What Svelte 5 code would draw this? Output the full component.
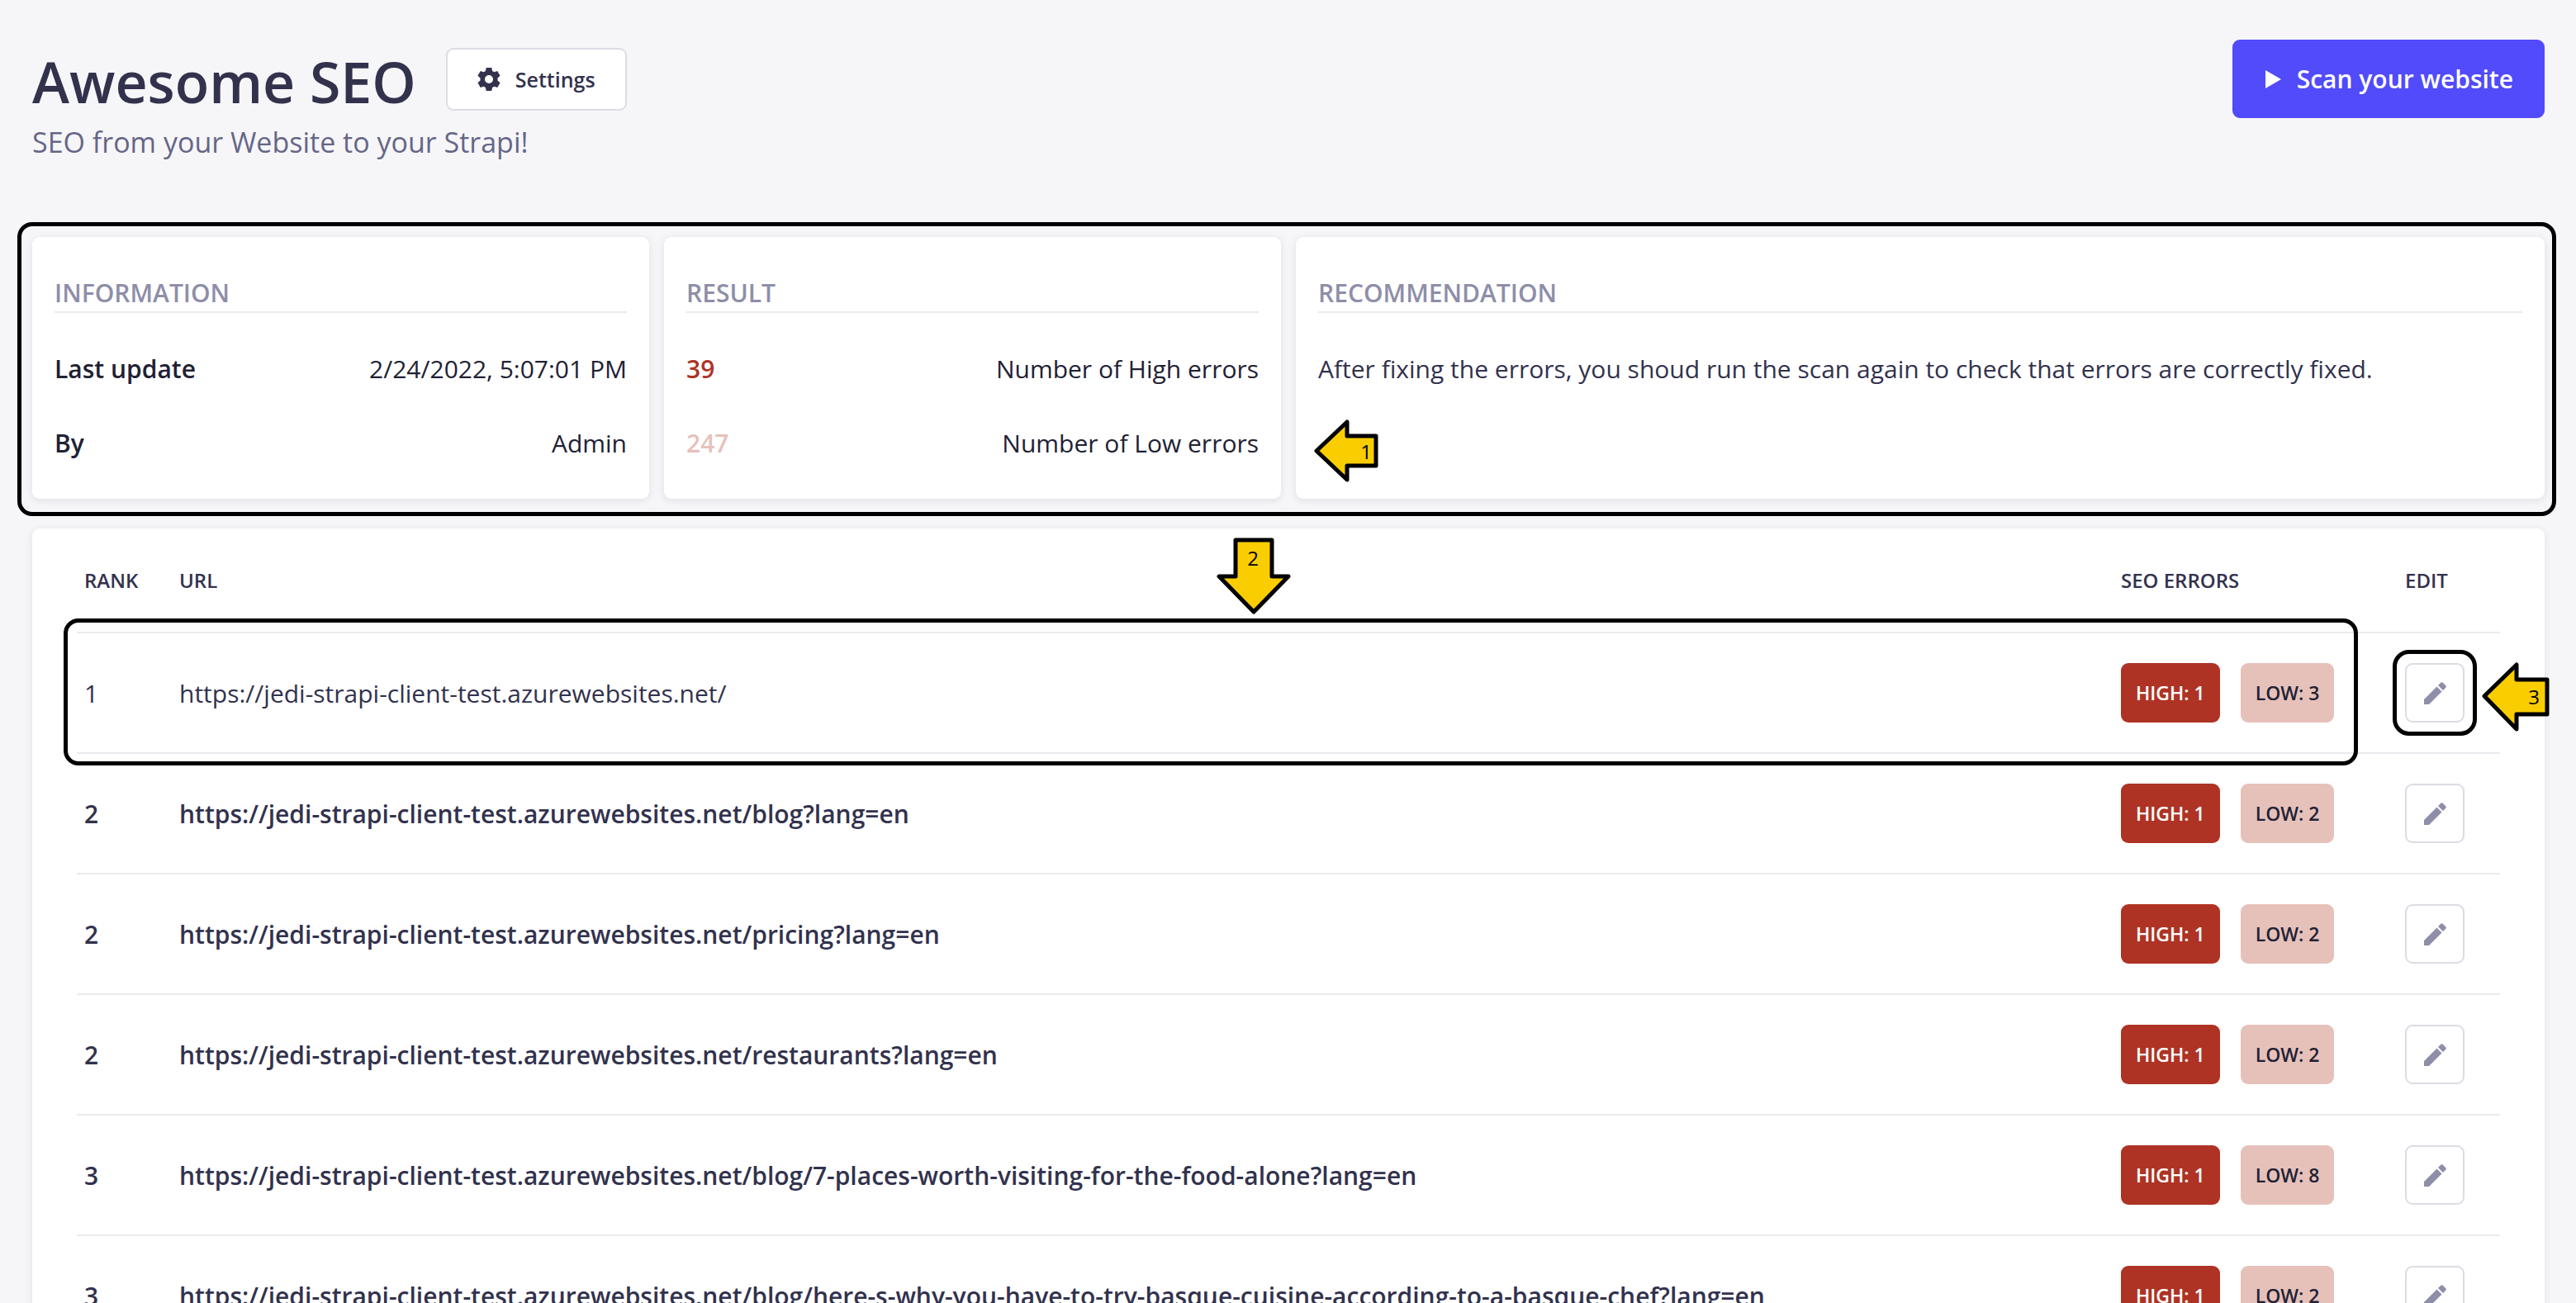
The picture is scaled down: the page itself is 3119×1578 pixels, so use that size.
<script>
  const base = 'https://jedi-strapi-client-test.azurewebsites.net/';
  const rows = [
    { rank: 1, path: '', high: 1, low: 3, current: true },
    { rank: 2, path: 'blog?lang=en', high: 1, low: 2 },
    { rank: 2, path: 'pricing?lang=en', high: 1, low: 2 },
    { rank: 2, path: 'restaurants?lang=en', high: 1, low: 2 },
    { rank: 3, path: 'blog/7-places-worth-visiting-for-the-food-alone?lang=en', high: 1, low: 8 },
    { rank: 3, path: 'blog/here-s-why-you-have-to-try-basque-cuisine-according-to-a-basque-chef?lang=en', high: 1, low: 2 }
  ];
</script>

<div class="page">
  <header>
    <div class="title-row">
      <h1>Awesome SEO</h1>
      <button class="settings" type="button">
        <svg viewBox="0 0 24 24" aria-hidden="true">
          <path fill-rule="evenodd" d="M9.200 0h5.600l.7 3.400 2 1.200 3.300-1.100 2.800 4.900L21 10.700v2.600l2.600 2.300-2.800 4.900-3.300-1.100-2 1.200-.7 3.400H9.200l-.7-3.400-2-1.200-3.300 1.100-2.800-4.900L3 13.300v-2.600L.4 8.400l2.800-4.900 3.300 1.100 2-1.200zM12 7.700a4.300 4.300 0 1 0 0 8.600 4.300 4.300 0 0 0 0-8.600z" />
        </svg>
        Settings
      </button>
      <button class="scan" type="button">
        <svg viewBox="0 0 20 22" aria-hidden="true"><path d="M0 0 19 11 0 22z" /></svg>
        Scan your website
      </button>
    </div>
    <p class="subtitle">SEO from your Website to your Strapi!</p>
  </header>

  <main>
    <div class="cards">
      <section class="card">
        <h2>INFORMATION</h2>
        <dl>
          <div><dt>Last update</dt><dd>2/24/2022, 5:07:01 PM</dd></div>
          <div><dt>By</dt><dd>Admin</dd></div>
        </dl>
      </section>
      <section class="card">
        <h2>RESULT</h2>
        <dl>
          <div><dt class="high-count">39</dt><dd>Number of High errors</dd></div>
          <div><dt class="low-count">247</dt><dd>Number of Low errors</dd></div>
        </dl>
      </section>
      <section class="card wide">
        <h2>RECOMMENDATION</h2>
        <p>After fixing the errors, you shoud run the scan again to check that errors are correctly fixed.</p>
        <svg class="arrow arrow-1" viewBox="0 0 78 76" aria-hidden="true">
          <path d="M3 38 40 3V20H75V56H40V73z" />
          <text x="63" y="48">1</text>
        </svg>
      </section>
      <div class="frame cards-frame"></div>
    </div>

    <section class="table-card">
      <table>
        <thead>
          <tr>
            <th class="rank">RANK</th>
            <th>URL</th>
            <th class="errors">SEO ERRORS</th>
            <th class="edit">EDIT</th>
          </tr>
        </thead>
        <tbody>
          {#each rows as row}
            <tr class:current={row.current}>
              <td class="rank">{row.rank}</td>
              <td>{base}{row.path}</td>
              <td>
                <div class="badges">
                  <span class="badge high">HIGH: {row.high}</span>
                  <span class="badge low">LOW: {row.low}</span>
                </div>
                {#if row.current}
                  <div class="frame row-frame"></div>
                  <svg class="arrow arrow-2" viewBox="0 0 92 94" aria-hidden="true">
                    <path d="M24 3H68V47H88L46 90 4 47H24z" />
                    <text x="45" y="34">2</text>
                  </svg>
                {/if}
              </td>
              <td>
                <div class="edit-cell">
                  <button class="pencil" type="button" aria-label="Edit {base}{row.path}">
                    <svg viewBox="0 0 27 27" aria-hidden="true">
                      <path d="M0 27V21L15.500 5.500 21.500 11.500 6 27zM17 4 20 1Q21.500-.5 23 1L26 4Q27.500 5.500 26 7L23 10z" />
                    </svg>
                  </button>
                  {#if row.current}
                    <div class="frame edit-frame"></div>
                    <svg class="arrow arrow-3" viewBox="0 0 82 86" aria-hidden="true">
                      <path d="M3 42 42 4V22H79V64H42V82z" />
                      <text x="63" y="52">3</text>
                    </svg>
                  {/if}
                </div>
              </td>
            </tr>
          {/each}
        </tbody>
      </table>
    </section>
  </main>
</div>

<style>
  :global(body) {
    background: #f6f6f9;
  }
  .page {
    height: 100vh;
    overflow-y: auto;
    scrollbar-width: none;
    box-sizing: border-box;
    padding: 48px 38px 54px 39px;
    background: #f6f6f9;
    color: #32324d;
    font-family: 'Open Sans', 'Noto Sans', sans-serif;
    font-size: 30px;
    line-height: 45px;
  }
  h1, h2, p, dl, dd {
    margin: 0;
  }
  .title-row {
    display: flex;
    align-items: center;
    gap: 36px;
    height: 95px;
  }
  h1 {
    padding-top: 6px;
    font-size: 68px;
    line-height: 90px;
    font-weight: 600;
  }
  button {
    display: flex;
    align-items: center;
    justify-content: center;
    box-sizing: border-box;
    border: 2px solid #dcdce4;
    border-radius: 9px;
    background: #fff;
    color: #32324d;
    font-family: inherit;
    font-weight: 600;
  }
  .settings {
    height: 76px;
    padding: 0 36px;
    gap: 18px;
    font-size: 25px;
  }
  .settings svg {
    width: 28px;
    height: 28px;
    fill: #32324d;
  }
  .scan {
    height: 95px;
    margin-left: auto;
    padding: 0 36px 0 38px;
    gap: 18px;
    border-color: #514bfb;
    background: #514bfb;
    color: #fff;
    font-size: 30px;
  }
  .scan svg {
    width: 20px;
    height: 22px;
    fill: #fff;
  }
  .subtitle {
    margin-bottom: 86px;
    color: #666687;
    font-size: 34px;
    line-height: 58px;
  }
  .cards {
    position: relative;
    display: grid;
    grid-template-columns: repeat(12, 1fr);
    gap: 18px;
    margin-bottom: 36px;
  }
  .card {
    position: relative;
    grid-column: span 3;
    padding: 46px 27px 22px;
  }
  .card.wide {
    grid-column: span 6;
  }
  .card, .table-card {
    border-radius: 9px;
    background: #fff;
    box-shadow: 0 2px 10px rgba(33, 33, 52, 0.1);
  }
  h2 {
    margin-bottom: 23px;
    border-bottom: 2px solid #eaeaef;
    color: #8e8ea9;
    font-size: 30px;
    line-height: 44px;
    font-weight: 600;
  }
  dl div {
    display: flex;
    justify-content: space-between;
    color: #212134;
    line-height: 90px;
  }
  dt {
    font-weight: 600;
  }
  .high-count {
    color: #ae3324;
  }
  .low-count {
    color: #e6c1ba;
  }
  .card p {
    line-height: 90px;
  }
  .table-card {
    padding: 0 54px 54px;
  }
  table {
    width: 100%;
    table-layout: fixed;
    border-spacing: 0;
  }
  th, td {
    box-sizing: border-box;
    padding: 0;
    border-bottom: 2px solid #eaeaef;
    text-align: left;
    white-space: nowrap;
  }
  th {
    height: 127px;
    font-size: 24px;
    font-weight: 600;
  }
  td {
    height: 146px;
    font-weight: 600;
  }
  .current {
    position: relative;
  }
  .current td {
    font-weight: 400;
  }
  .rank {
    width: 124px;
    padding-left: 9px;
  }
  .errors {
    width: 344px;
  }
  .edit {
    width: 115px;
  }
  .badges {
    display: flex;
    gap: 25px;
  }
  .badge {
    box-sizing: border-box;
    height: 72px;
    padding: 0 18px;
    border-radius: 9px;
    font-size: 23px;
    line-height: 72px;
    font-weight: 600;
  }
  .high {
    background: #ae3324;
    color: #fff;
  }
  .low {
    background: #e6c1ba;
    color: #212134;
  }
  .edit-cell {
    position: relative;
    width: 72px;
  }
  .pencil {
    width: 72px;
    height: 72px;
    padding: 0;
  }
  .pencil svg {
    width: 27px;
    height: 27px;
    fill: #8e8ea9;
  }
  .frame {
    position: absolute;
    box-sizing: border-box;
    border: 5px solid #000;
    border-radius: 18px;
    pointer-events: none;
  }
  .cards-frame {
    inset: -18px -14px -21px -18px;
  }
  .row-frame {
    inset: -18px 172px -14px -16px;
  }
  .edit-frame {
    inset: -16px -15px;
    border-radius: 20px;
  }
  .arrow {
    position: absolute;
    pointer-events: none;
  }
  .arrow path {
    fill: #facd00;
    stroke: #000;
    stroke-width: 5px;
    stroke-linejoin: round;
  }
  .arrow text {
    fill: #000;
    font-size: 24px;
    font-weight: 400;
    text-anchor: middle;
  }
  .arrow-1 {
    left: 22px;
    bottom: 20px;
    width: 78px;
    height: 76px;
  }
  .arrow-2 {
    left: 47%;
    top: -116px;
    width: 92px;
    height: 94px;
  }
  .arrow-3 {
    left: 93px;
    top: -2px;
    width: 82px;
    height: 86px;
  }
</style>
